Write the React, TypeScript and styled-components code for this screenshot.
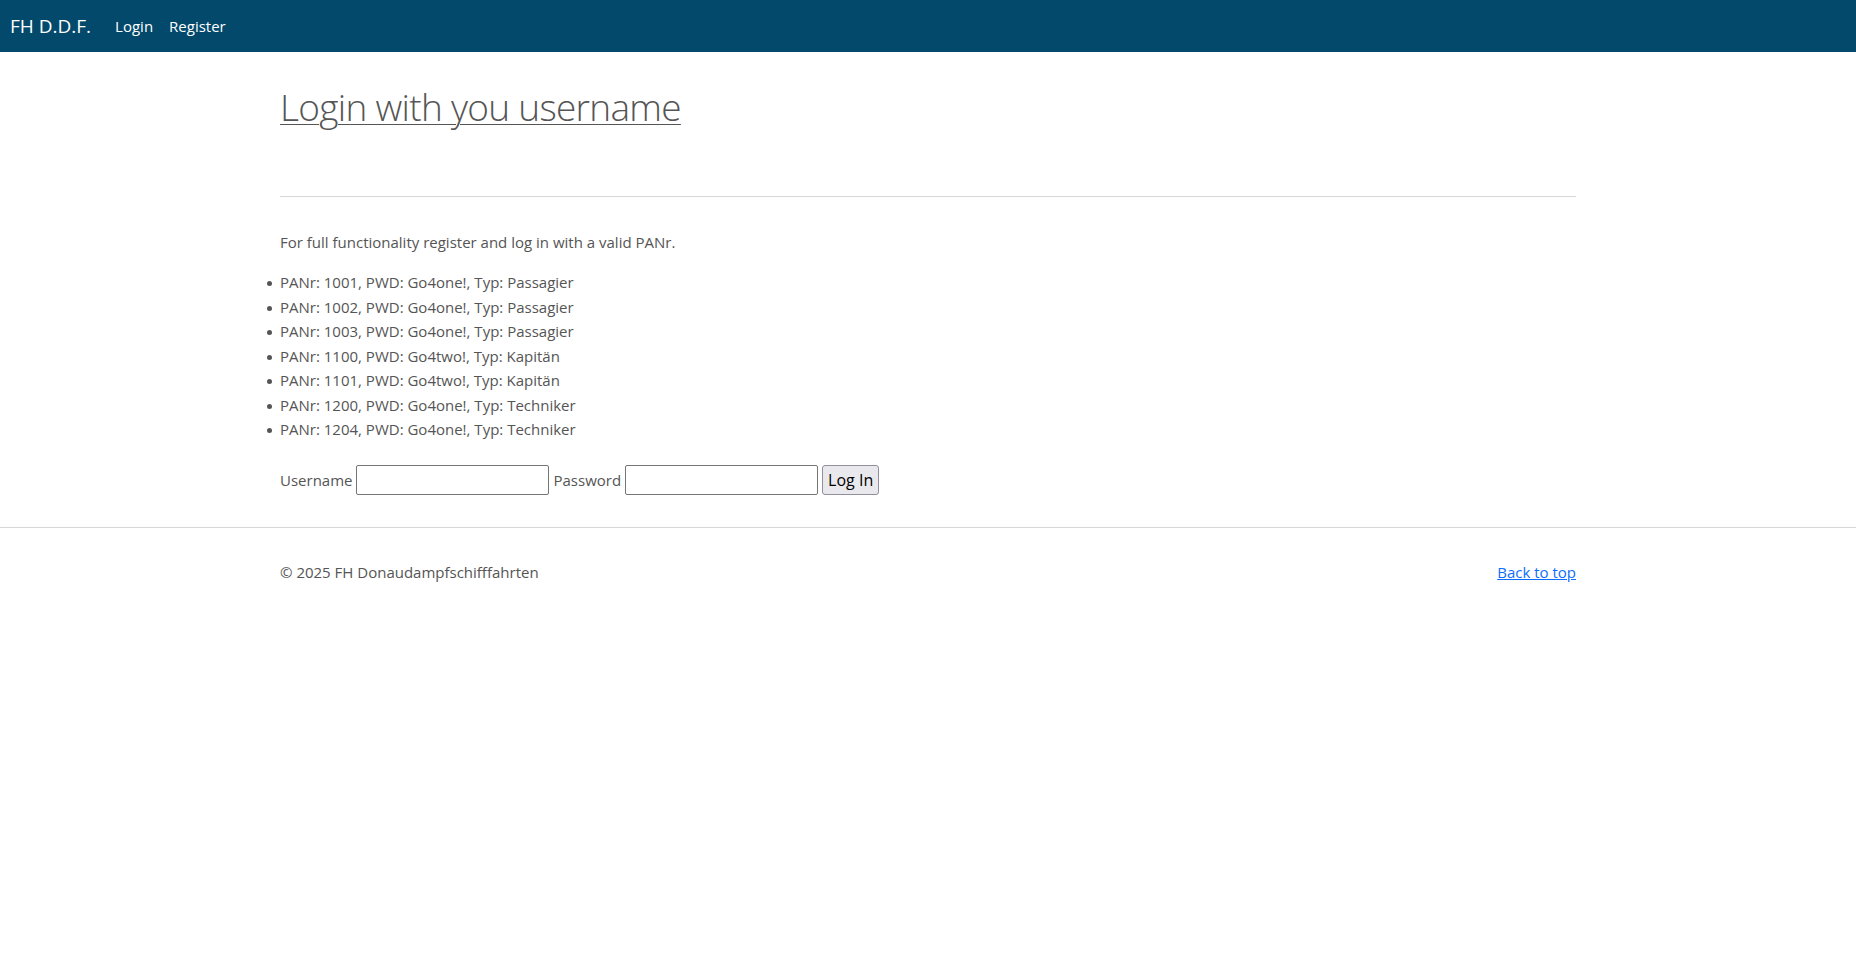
import React from 'react';
import styled, { createGlobalStyle } from 'styled-components';

const GlobalStyle = createGlobalStyle`
  *, *::before, *::after {
    box-sizing: border-box;
  }

  body {
    margin: 0;
    font-family: "Open Sans", "Noto Sans", sans-serif;
    font-size: 15px;
    line-height: 24px;
    color: #555;
    background: #fff;
  }
`;

const Navbar = styled.nav`
  height: 52px;
  background: #02496b;
  display: flex;
  align-items: center;
  padding: 0 10px;
`;

const Brand = styled.a`
  color: #fff;
  font-size: 19px;
  text-decoration: none;
  margin-right: 16px;
`;

const NavLink = styled.a`
  color: #fff;
  font-size: 15px;
  text-decoration: none;
  padding: 8px;
`;

const Container = styled.div`
  max-width: 1320px;
  margin: 0 auto;
  padding: 0 12px;
`;

const Main = styled.main`
  padding: 32px 0 32px;
`;

const Title = styled.h1`
  margin: 0;
  font-size: 37px;
  font-weight: 300;
  letter-spacing: -0.7px;
  line-height: 46px;

  a {
    color: #555;
    text-decoration: underline;
    text-underline-offset: 3px;
    text-decoration-thickness: 1px;
  }
`;

const Divider = styled.hr`
  margin: 66px 0 33px;
  border: 0;
  border-top: 1px solid #d8d8d8;
`;

const Intro = styled.p`
  margin: 0 0 16px;
`;

const AccountList = styled.ul`
  margin: 0 0 23px;
  padding: 0;
  list-style: none;
`;

const AccountItem = styled.li`
  line-height: 24.5px;

  &::before {
    content: '';
    display: inline-block;
    width: 5px;
    height: 5px;
    border-radius: 50%;
    background: #555;
    margin-left: -13px;
    margin-right: 8px;
    vertical-align: middle;
  }
`;

const LoginForm = styled.form`
  display: flex;
  align-items: center;
  gap: 4px;
`;

const Label = styled.label`
  line-height: 24px;
`;

const Input = styled.input`
  width: 193px;
  height: 30px;
  font: inherit;
  padding: 1px 3px;
  border: 1px solid #767676;
  border-radius: 2px;
  background: #fff;
`;

const SubmitButton = styled.button`
  height: 30px;
  font: inherit;
  font-size: 16px;
  color: #000;
  padding: 0 5px;
  background: #e9e9ed;
  border: 1px solid #8f8f9d;
  border-radius: 3px;
  line-height: 1;
`;

const Footer = styled.footer`
  border-top: 1px solid #d8d8d8;
  padding: 32px 0;
`;

const FooterRow = styled.div`
  display: flex;
  justify-content: space-between;
  align-items: center;
`;

const TopLink = styled.a`
  color: #0d6efd;
  text-decoration: underline;
`;

const accounts = [
  { nr: 1001, pwd: 'Go4one!', typ: 'Passagier' },
  { nr: 1002, pwd: 'Go4one!', typ: 'Passagier' },
  { nr: 1003, pwd: 'Go4one!', typ: 'Passagier' },
  { nr: 1100, pwd: 'Go4two!', typ: 'Kapitän' },
  { nr: 1101, pwd: 'Go4two!', typ: 'Kapitän' },
  { nr: 1200, pwd: 'Go4one!', typ: 'Techniker' },
  { nr: 1204, pwd: 'Go4one!', typ: 'Techniker' },
];

const App: React.FC = () => {
  return (
    <>
      <GlobalStyle />
      <Navbar>
        <Brand href="#">FH D.D.F.</Brand>
        <NavLink href="#">Login</NavLink>
        <NavLink href="#">Register</NavLink>
      </Navbar>

      <Container>
        <Main>
          <Title>
            <a href="#">Login with you username</a>
          </Title>
          <Divider />
          <Intro>For full functionality register and log in with a valid PANr.</Intro>
          <AccountList>
            {accounts.map((a) => (
              <AccountItem key={a.nr}>
                PANr: {a.nr}, PWD: {a.pwd}, Typ: {a.typ}
              </AccountItem>
            ))}
          </AccountList>
          <LoginForm onSubmit={(e) => e.preventDefault()}>
            <Label htmlFor="username">Username</Label>
            <Input id="username" type="text" />
            <Label htmlFor="password">Password</Label>
            <Input id="password" type="password" />
            <SubmitButton type="submit">Log In</SubmitButton>
          </LoginForm>
        </Main>
      </Container>

      <Footer>
        <Container>
          <FooterRow>
            <span>© 2025 FH Donaudampfschifffahrten</span>
            <TopLink href="#">Back to top</TopLink>
          </FooterRow>
        </Container>
      </Footer>
    </>
  );
};

export default App;
